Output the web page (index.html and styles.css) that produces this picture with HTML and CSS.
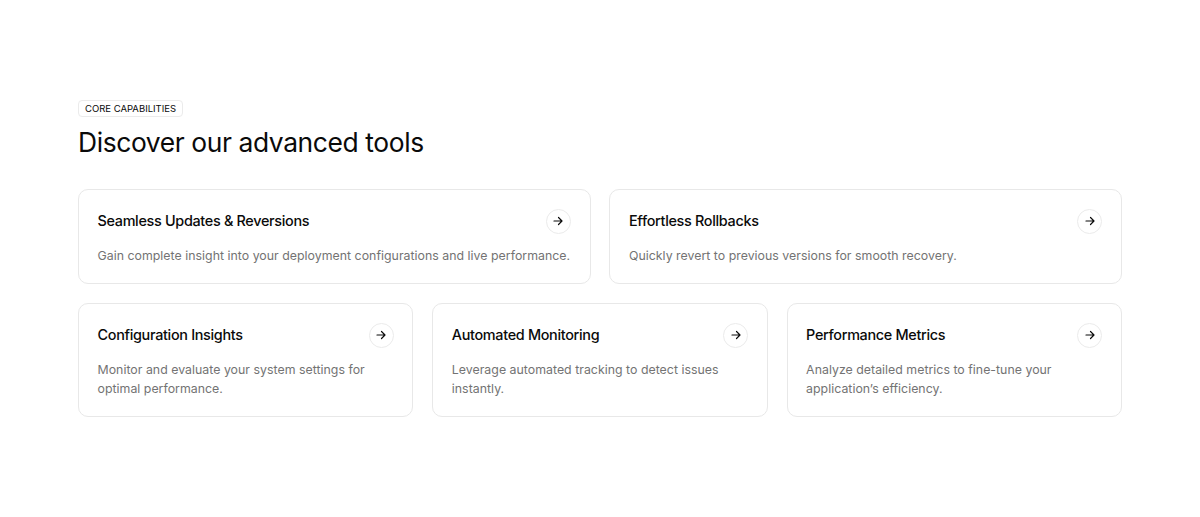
FILE: index.html
```html
<!DOCTYPE html>
<html lang="en">
<head>
<meta charset="utf-8">
<title>Core capabilities</title>
<link rel="stylesheet" href="styles.css">
</head>
<body>
<section class="section">
  <span class="badge">CORE CAPABILITIES</span>
  <h2 class="heading">Discover our advanced tools</h2>
  <div class="rows">
    <div class="row">
      <article class="card">
        <div class="card-head"><h3 class="card-title">Seamless Updates &amp; Reversions</h3><span class="arrow"><svg viewBox="0 0 24 24" width="12" height="12"><path d="M4 12h16M13 5l7 7-7 7"/></svg></span></div>
        <p class="card-text">Gain complete insight into your deployment configurations and live performance.</p>
      </article>
      <article class="card">
        <div class="card-head"><h3 class="card-title">Effortless Rollbacks</h3><span class="arrow"><svg viewBox="0 0 24 24" width="12" height="12"><path d="M4 12h16M13 5l7 7-7 7"/></svg></span></div>
        <p class="card-text">Quickly revert to previous versions for smooth recovery.</p>
      </article>
    </div>
    <div class="row">
      <article class="card">
        <div class="card-head"><h3 class="card-title">Configuration Insights</h3><span class="arrow"><svg viewBox="0 0 24 24" width="12" height="12"><path d="M4 12h16M13 5l7 7-7 7"/></svg></span></div>
        <p class="card-text">Monitor and evaluate your system settings for optimal performance.</p>
      </article>
      <article class="card">
        <div class="card-head"><h3 class="card-title">Automated Monitoring</h3><span class="arrow"><svg viewBox="0 0 24 24" width="12" height="12"><path d="M4 12h16M13 5l7 7-7 7"/></svg></span></div>
        <p class="card-text">Leverage automated tracking to detect issues instantly.</p>
      </article>
      <article class="card">
        <div class="card-head"><h3 class="card-title">Performance Metrics</h3><span class="arrow"><svg viewBox="0 0 24 24" width="12" height="12"><path d="M4 12h16M13 5l7 7-7 7"/></svg></span></div>
        <p class="card-text">Analyze detailed metrics to fine-tune your application’s efficiency.</p>
      </article>
    </div>
  </div>
</section>
</body>
</html>
```

FILE: styles.css
```css
* { box-sizing: border-box; }
html, body { margin: 0; background: #fff; }
body { font-family: Inter, "Liberation Sans", sans-serif; color: #0a0a0a; }
.section { padding: 100px 78px 100px; display: flex; flex-direction: column; align-items: flex-start; }
.badge { font-size: 9.5px; line-height: 15px; font-weight: 400; padding: 0 6px; height: 17px; border: 1px solid #ebebeb; border-radius: 4px; display: inline-flex; align-items: center; }
.heading { margin: 7px 0 29px; font-size: 26.4px; line-height: 36px; font-weight: 400; letter-spacing: -0.39px; }
.rows { width: 100%; display: flex; flex-direction: column; gap: 19px; }
.row { display: flex; gap: 18.9px; }
.card { flex: 1 1 0; min-width: 0; padding: 18px 18.7px 18px 18.5px; border: 1px solid #e8e8e8; border-radius: 10px; }
.card-head { display: flex; justify-content: space-between; align-items: center; height: 26px; margin-bottom: 12px; }
.card-title { margin: 0; font-size: 14.4px; line-height: 20px; font-weight: 500; letter-spacing: -0.31px; }
.arrow { width: 25px; height: 25px; flex: none; border: 1px solid #ebebeb; border-radius: 50%; display: flex; align-items: center; justify-content: center; }
.arrow svg { fill: none; stroke: #0a0a0a; stroke-width: 2.4; stroke-linecap: round; stroke-linejoin: round; }
.card-text { margin: 0; font-size: 12.35px; line-height: 19px; color: #737373; letter-spacing: 0.015px; }
```
